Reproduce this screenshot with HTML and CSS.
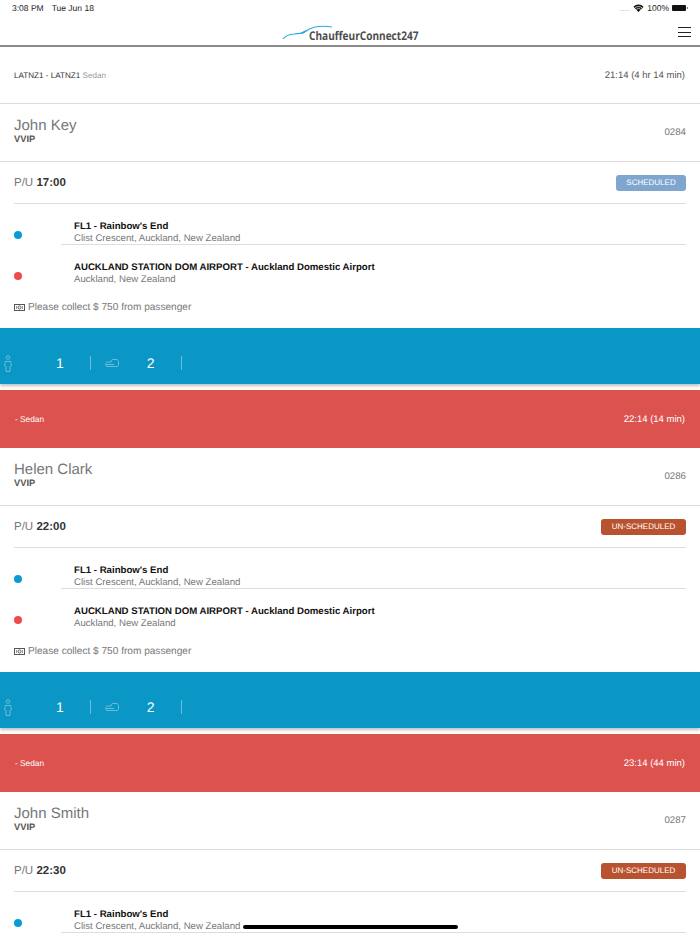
FILE: index.html
```html
<!DOCTYPE html>
<html lang="en">
<head>
  <meta charset="UTF-8">
  <title>ChauffeurConnect247</title>
  <link rel="stylesheet" href="styles.css">
</head>
<body>

<div class="statusBar">
  <div class="statusLeft"><span>3:08 PM</span><span>Tue Jun 18</span></div>
  <div class="statusRight">
    <span class="signalDots">....</span>
    <svg width="11" height="8" viewBox="0 0 12 9"><path d="M6 9 L0.3 3 A8.2 8.2 0 0 1 11.7 3 Z" fill="#111"/><path d="M1.9 4.4 A6 6 0 0 1 10.1 4.4" fill="none" stroke="#fff" stroke-width="0.8"/><path d="M3.4 6 A3.9 3.9 0 0 1 8.6 6" fill="none" stroke="#fff" stroke-width="0.8"/></svg>
    <span>100%</span>
    <span class="battery"></span>
  </div>
</div>

<div id="header">
  <div class="logo">
    <svg class="logoCar" width="52" height="16" viewBox="0 0 52 16"><path d="M1 14 C3 11 6 9.5 12 9 C16 8.5 19 8.5 22 7.5 C25 5 28 3 33 2 C38 1 44 1 50 2" fill="none" stroke="#29abe2" stroke-width="1.1"/><path d="M16 9 L25 4.5 L21.5 8.5 Z" fill="#29abe2"/></svg>
    <span class="logoText">ChauffeurConnect247</span>
  </div>
  <div class="menuIcon"><span></span><span></span><span></span></div>
</div>

<div class="tripBand plain">
  <div><span class="codes">LATNZ1 - LATNZ1</span> <span class="carType">Sedan</span></div>
  <div class="bandTime">21:14 (4 hr 14 min)</div>
</div>

<div class="nameRow">
  <div>
    <div class="paxName">John Key</div>
    <div class="paxLevel">VVIP</div>
  </div>
  <div class="tripNo">0284</div>
</div>
<div class="pickupRow">
  <div class="pickup">P/U <b>17:00</b></div>
  <div class="badge scheduled">SCHEDULED</div>
</div>
<div class="stops">
  <div class="stop first">
    <span class="dot blueDot"></span>
    <div class="stopText">
      <div class="stopName">FL1 - Rainbow's End</div>
      <div class="stopAddress">Clist Crescent, Auckland, New Zealand</div>
    </div>
  </div>
  <div class="stop">
    <span class="dot redDot"></span>
    <div class="stopText">
      <div class="stopName">AUCKLAND STATION DOM AIRPORT - Auckland Domestic Airport</div>
      <div class="stopAddress">Auckland, New Zealand</div>
    </div>
  </div>
</div>
<div class="collect">
  <svg width="11" height="7" viewBox="0 0 11 7"><rect x="0.5" y="0.5" width="10" height="6" fill="none" stroke="#555"/><circle cx="5.5" cy="3.5" r="1.5" fill="none" stroke="#555"/><path d="M2.5 2v3M8.5 2v3" stroke="#999"/></svg>
  Please collect $ 750 from passenger
</div>
<div class="countBar">
  <svg class="paxIcon" width="8" height="17" viewBox="0 0 8 17"><circle cx="4" cy="2.5" r="1.8" fill="none" stroke="#6cbcdb"/><path d="M1.5 6.5h5l1 4-1.5 1v5h-4v-5l-1.5-1z" fill="none" stroke="#6cbcdb"/></svg>
  <span class="countNum pax">1</span>
  <span class="countSep"></span>
  <svg class="bagIcon" width="14" height="8" viewBox="0 0 14 8"><path d="M2 7.5h10c1 0 1.500-.7 1.500-1.500V2.500c0-1.200-.8-2-2-2H8c-1.200 0-1.800.8-2 2.500H2C1 3.500.5 4.500.5 5.500s.5 2 1.500 2zM1 5.500h8" fill="none" stroke="#6cbcdb"/></svg>
  <span class="countNum bags">2</span>
  <span class="countSep"></span>
</div>

<div class="tripBand red">
  <div class="redLabel">- Sedan</div>
  <div class="bandTime">22:14 (14 min)</div>
</div>

<div class="nameRow">
  <div>
    <div class="paxName">Helen Clark</div>
    <div class="paxLevel">VVIP</div>
  </div>
  <div class="tripNo">0286</div>
</div>
<div class="pickupRow">
  <div class="pickup">P/U <b>22:00</b></div>
  <div class="badge unscheduled">UN-SCHEDULED</div>
</div>
<div class="stops">
  <div class="stop first">
    <span class="dot blueDot"></span>
    <div class="stopText">
      <div class="stopName">FL1 - Rainbow's End</div>
      <div class="stopAddress">Clist Crescent, Auckland, New Zealand</div>
    </div>
  </div>
  <div class="stop">
    <span class="dot redDot"></span>
    <div class="stopText">
      <div class="stopName">AUCKLAND STATION DOM AIRPORT - Auckland Domestic Airport</div>
      <div class="stopAddress">Auckland, New Zealand</div>
    </div>
  </div>
</div>
<div class="collect">
  <svg width="11" height="7" viewBox="0 0 11 7"><rect x="0.5" y="0.5" width="10" height="6" fill="none" stroke="#555"/><circle cx="5.5" cy="3.5" r="1.5" fill="none" stroke="#555"/><path d="M2.5 2v3M8.5 2v3" stroke="#999"/></svg>
  Please collect $ 750 from passenger
</div>
<div class="countBar">
  <svg class="paxIcon" width="8" height="17" viewBox="0 0 8 17"><circle cx="4" cy="2.5" r="1.8" fill="none" stroke="#6cbcdb"/><path d="M1.5 6.5h5l1 4-1.5 1v5h-4v-5l-1.5-1z" fill="none" stroke="#6cbcdb"/></svg>
  <span class="countNum pax">1</span>
  <span class="countSep"></span>
  <svg class="bagIcon" width="14" height="8" viewBox="0 0 14 8"><path d="M2 7.5h10c1 0 1.500-.7 1.500-1.500V2.500c0-1.200-.8-2-2-2H8c-1.200 0-1.800.8-2 2.500H2C1 3.500.5 4.500.5 5.500s.5 2 1.500 2zM1 5.500h8" fill="none" stroke="#6cbcdb"/></svg>
  <span class="countNum bags">2</span>
  <span class="countSep"></span>
</div>

<div class="tripBand red">
  <div class="redLabel">- Sedan</div>
  <div class="bandTime">23:14 (44 min)</div>
</div>

<div class="nameRow">
  <div>
    <div class="paxName">John Smith</div>
    <div class="paxLevel">VVIP</div>
  </div>
  <div class="tripNo">0287</div>
</div>
<div class="pickupRow">
  <div class="pickup">P/U <b>22:30</b></div>
  <div class="badge unscheduled">UN-SCHEDULED</div>
</div>
<div class="stops">
  <div class="stop first">
    <span class="dot blueDot"></span>
    <div class="stopText">
      <div class="stopName">FL1 - Rainbow's End</div>
      <div class="stopAddress">Clist Crescent, Auckland, New Zealand</div>
    </div>
  </div>
</div>

<div class="homeBar"></div>

</body>
</html>
```

FILE: styles.css
```css
html, body {
  height: 934px;
  overflow: hidden;
}

body {
  margin: 0;
  position: relative;
  font-family: "Liberation Sans", Arial, sans-serif;
  text-rendering: geometricPrecision;
  background-color: #FFFFFF;
  color: #777777;
}

.statusBar {
  display: flex;
  justify-content: space-between;
  align-items: center;
  height: 16px;
  padding: 0 12px 2px 12px;
  font-size: 8.5px;
  color: #222222;
}

.statusLeft {
  display: flex;
  gap: 8px;
}

.statusRight {
  display: flex;
  align-items: center;
  gap: 3px;
}

.signalDots {
  color: #aaaaaa;
  margin-right: 1px;
}

.battery {
  display: block;
  position: relative;
  width: 14px;
  height: 6px;
  margin-right: 2px;
  background-color: #111111;
  border-radius: 1px;
}

.battery::after {
  content: "";
  position: absolute;
  left: 15px;
  top: 2px;
  width: 1px;
  height: 2px;
  background-color: #777777;
}

#header {
  display: flex;
  justify-content: center;
  position: relative;
  height: 27px;
  border-bottom: 2px solid #8a8a8a;
}

.logo {
  display: flex;
  align-items: flex-end;
  position: relative;
  width: 137px;
  padding-bottom: 1px;
  padding-left: 27px;
  box-sizing: border-box;
}

.logoCar {
  position: absolute;
  left: 0;
  top: 7px;
}

.logoText {
  font-family: "Open Sans", sans-serif;
  font-weight: 700;
  font-size: 12px;
  white-space: nowrap;
  color: #4d4d4d;
  transform: scaleX(0.84);
  transform-origin: left center;
}

.menuIcon {
  position: absolute;
  right: 9px;
  top: 9px;
  display: flex;
  flex-direction: column;
  gap: 3.5px;
}

.menuIcon span {
  display: block;
  width: 13px;
  height: 1px;
  background-color: #222222;
}

.tripBand {
  display: flex;
  justify-content: space-between;
  align-items: center;
  height: 58px;
  padding: 0 15px 0 15px;
  font-size: 9.5px;
}

.tripBand.plain {
  height: 56px;
  padding-left: 14px;
  border-bottom: 1px solid #dddddd;
  font-size: 8.1px;
}

.codes {
  color: #333333;
}

.carType {
  color: #999999;
}

.plain .bandTime {
  font-size: 9.5px;
  color: #555555;
}

.tripBand.red {
  background-color: #DC524F;
  color: #FFFFFF;
  margin-top: 6px;
}

.redLabel {
  font-size: 8.3px;
}

.nameRow {
  display: flex;
  justify-content: space-between;
  align-items: center;
  height: 53px;
  padding: 0 14px 4px 14px;
  border-bottom: 1px solid #dddddd;
}

.paxName {
  font-size: 15px;
  line-height: 17px;
}

.paxLevel {
  font-size: 9.3px;
  font-weight: bold;
  line-height: 11px;
  color: #555555;
}

.tripNo {
  font-size: 9.7px;
  margin-top: 4px;
}

.pickupRow {
  display: flex;
  justify-content: space-between;
  align-items: center;
  height: 41px;
  margin: 0 14px;
  border-bottom: 1px solid #dddddd;
}

.pickup {
  font-size: 11.5px;
}

.pickup b {
  color: #333333;
}

.badge {
  width: 70px;
  height: 16px;
  line-height: 16px;
  border-radius: 3px;
  text-align: center;
  font-size: 8px;
  color: #FFFFFF;
}

.badge.scheduled {
  background-color: #7FA6CF;
}

.badge.unscheduled {
  width: 85px;
  background-color: #B9532F;
}

.stop {
  display: flex;
  align-items: flex-end;
  height: 41px;
  padding-left: 14px;
}

.dot {
  width: 8px;
  height: 8px;
  margin-bottom: 6px;
  border-radius: 50%;
  flex: none;
}

.blueDot {
  background-color: #0A9BD4;
}

.redDot {
  background-color: #F04B4B;
}

.stopText {
  flex: 1;
  margin: 0 14px 0 39px;
  padding-left: 13px;
  padding-top: 2px;
  height: 23px;
  border-bottom: 1px solid transparent;
}

.stop.first .stopText {
  border-bottom-color: #dddddd;
}

.stopName {
  font-size: 9.65px;
  font-weight: bold;
  line-height: 12px;
  color: #111111;
}

.stopAddress {
  font-size: 9.65px;
  line-height: 11px;
  color: #777777;
}

.collect {
  display: flex;
  align-items: center;
  gap: 3px;
  height: 42px;
  padding-left: 14px;
  font-size: 10.1px;
  color: #777777;
}

.countBar {
  display: flex;
  align-items: center;
  height: 42px;
  padding-top: 14px;
  background-color: #0A97C5;
  color: #FFFFFF;
  box-shadow: 0 2px 3px rgba(0, 0, 0, 0.25);
}

.paxIcon {
  margin-left: 4px;
}

.countNum {
  font-size: 14px;
}

.countNum.pax {
  margin-left: 44px;
  margin-right: 26px;
}

.countSep {
  display: block;
  width: 1px;
  height: 14px;
  background-color: #6cbcdb;
}

.bagIcon {
  margin-left: 14px;
}

.countNum.bags {
  margin-left: 28px;
  margin-right: 26px;
}

.homeBar {
  position: absolute;
  left: 243px;
  bottom: 5px;
  width: 215px;
  height: 4px;
  border-radius: 2px;
  background-color: #000000;
}
```
